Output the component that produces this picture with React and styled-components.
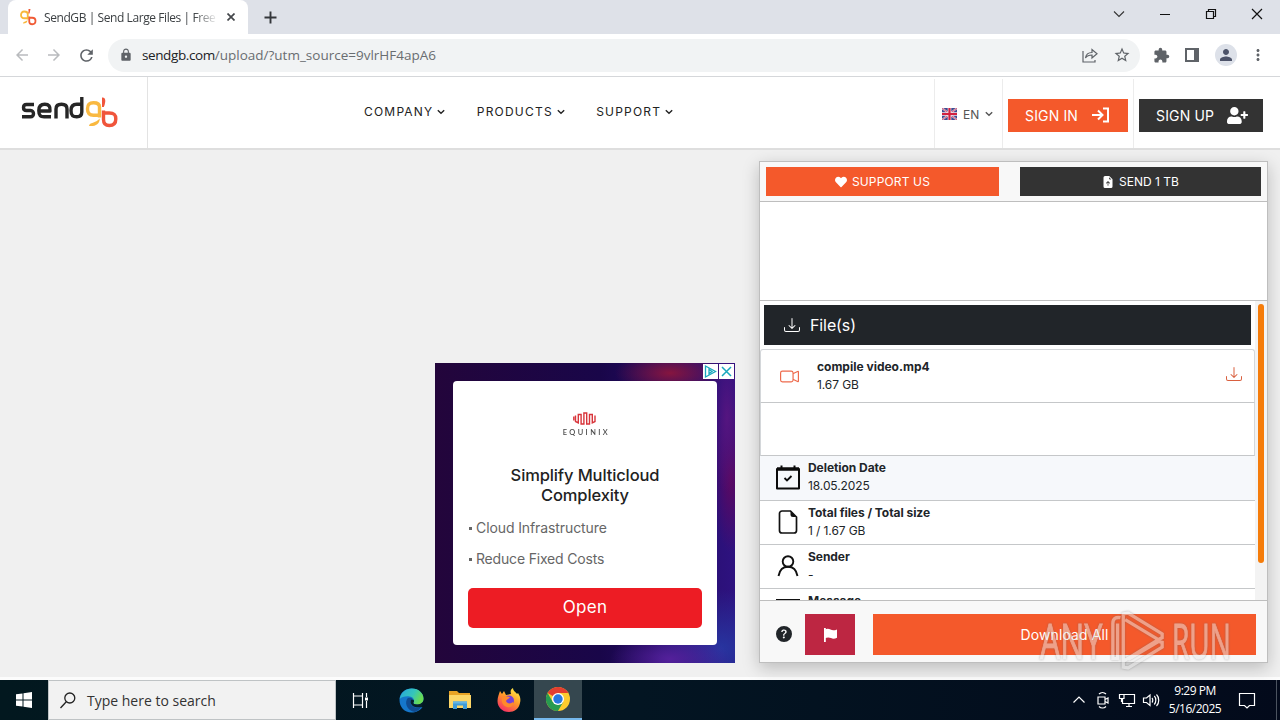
import React from 'react'
import styled, { createGlobalStyle, css } from 'styled-components'
import {
  BsCameraVideo,
  BsDownload,
  BsFileEarmarkArrowUpFill,
  BsQuestionCircleFill,
} from 'react-icons/bs'
import { FaHeart, FaUserPlus } from 'react-icons/fa'
import {
  MdArrowBack,
  MdArrowForward,
  MdExtension,
  MdLock,
  MdMoreVert,
  MdPerson,
  MdRefresh,
  MdStarBorder,
} from 'react-icons/md'

const orange = '#f4592b'
const dark = '#333333'
const line = '#bebebe'

const GlobalStyle = createGlobalStyle`
  * {
    box-sizing: border-box;
  }

  body {
    margin: 0;
    overflow: hidden;
    font-family: Inter, 'Liberation Sans', sans-serif;
    color: #212529;
  }

  svg {
    display: block;
    flex-shrink: 0;
  }

  p,
  h2 {
    margin: 0;
  }
`

const Screen = styled.div`
  display: flex;
  flex-direction: column;
  width: 1280px;
  height: 720px;
  background: #fff;
`

/* ---------- browser ---------- */

const TabStrip = styled.div`
  display: flex;
  height: 34px;
  background: #dee1e8;
`

const Tab = styled.div`
  display: flex;
  align-items: center;
  width: 240px;
  margin-left: 8px;
  padding: 0 10px 0 12px;
  border-radius: 8px 8px 0 0;
  background: #fff;
`

const TabTitle = styled.div`
  width: 172px;
  margin: 1px 11px 0 7px;
  overflow: hidden;
  white-space: nowrap;
  font: 12px/16px 'Open Sans', sans-serif;
  letter-spacing: -0.42px;
  color: #3c4043;
  mask-image: linear-gradient(90deg, #000 150px, transparent 174px);
`

const NewTab = styled.div`
  display: flex;
  align-items: center;
  margin-left: 16px;
`

const WindowButtons = styled.div`
  display: flex;
  align-items: center;
  gap: 34px;
  margin-left: auto;
  padding: 0 17px 6px 0;
`

const Toolbar = styled.div`
  display: flex;
  align-items: center;
  height: 43px;
  padding: 0 13px;
  border-bottom: 1px solid #d5d7da;
  color: #5f6368;
`

const NavButtons = styled.div`
  display: flex;
  gap: 14px;
  color: #5f6368;

  > :not(:last-child) {
    color: #b9bbbe;
  }
`

const AddressBar = styled.div`
  display: flex;
  align-items: center;
  width: 1032px;
  height: 33px;
  margin-left: 12px;
  padding: 0 9px 0 11px;
  border-radius: 17px;
  background: #f1f3f4;

  > :last-child {
    margin-left: 15px;
  }
`

const Url = styled.div`
  flex: 1;
  margin-left: 9px;
  font: 13.5px/20px 'Open Sans', sans-serif;
  color: #696d71;

  span {
    letter-spacing: -0.4px;
    color: #202124;
  }
`

const ToolbarIcons = styled.div`
  display: flex;
  align-items: center;
  margin-left: 13px;
  gap: 12.5px;
`

const Avatar = styled.div`
  display: grid;
  place-items: center;
  width: 22px;
  height: 22px;
  border-radius: 50%;
  background: #dde1e9;
  color: #4c5369;
`

/* ---------- site header ---------- */

const SiteHeader = styled.header`
  display: flex;
  height: 73px;
  border-bottom: 2px solid #dedede;
  background: #fff;
`

const LogoCell = styled.div`
  width: 148px;
  padding: 16px 0 0 20px;
  border-right: 1px solid #e3e3e3;
`

const Menu = styled.nav`
  display: flex;
  align-items: center;
  gap: 31.4px;
  margin-left: 216px;
  padding-bottom: 2px;
`

const MenuItem = styled.div`
  display: flex;
  align-items: center;
  gap: 4px;
  font-size: 12px;
  line-height: 20px;
  letter-spacing: 1.2px;
  color: #222;
`

const HeaderCell = styled.div`
  display: flex;
  align-items: center;
  width: ${({ $width }) => $width}px;
  margin-top: 2px;
  padding-left: ${({ $pad }) => $pad || 5}px;
  border-left: 1px solid #ececec;

  &:nth-child(3) {
    margin-left: auto;
  }
`

const Language = styled.div`
  display: flex;
  align-items: center;
  gap: 6px;
  padding-top: 1px;
  font-size: 12px;
  color: #555;
`

const HeaderButton = styled.div`
  display: flex;
  align-items: center;
  justify-content: space-between;
  width: ${({ $width }) => $width}px;
  height: 33px;
  margin-top: 3px;
  padding: 0 ${({ $right }) => $right}px 0 17px;
  background: ${({ $primary }) => ($primary ? orange : dark)};
  font-size: 14px;
  letter-spacing: 0.15px;
  color: #fff;
  white-space: nowrap;

  span {
    padding-top: 1px;
  }
`

/* ---------- content ---------- */

const Main = styled.main`
  display: flex;
  align-items: flex-end;
  justify-content: flex-end;
  gap: 24px;
  height: 530px;
  padding: 0 12px 14px 0;
  border-bottom: 3px solid #fcfcfc;
  background: #f0f0f0;
`

const Ad = styled.section`
  position: relative;
  width: 300px;
  height: 300px;
  padding: 18px;
  background: radial-gradient(ellipse 55px 22px at 235px 10px, #86153f, transparent),
    radial-gradient(ellipse 16px 75px at 292px 55px, #551580, transparent),
    radial-gradient(ellipse 18px 75px at 296px 115px, #5c0860, transparent),
    radial-gradient(ellipse 60px 28px at 235px 296px, #54209b, transparent),
    radial-gradient(ellipse 70px 60px at 286px 286px, #2735a0, transparent),
    linear-gradient(90deg, #23053b, #190649 55%, #2e1280);
`

const AdBadges = styled.div`
  position: absolute;
  top: 1px;
  right: 1px;
  display: flex;
  gap: 1px;

  svg {
    background: #fff;
  }
`

const AdCard = styled.div`
  display: flex;
  flex-direction: column;
  width: 264px;
  height: 264px;
  padding: 31px 15px 17px;
  border-radius: 4px;
  background: #fff;
`

const Equinix = styled.div`
  display: flex;
  flex-direction: column;
  align-items: center;
  gap: 3px;
  font: 600 7px/8px Lato, sans-serif;
  letter-spacing: 2.3px;
  color: #4a4a4a;

  span {
    display: block;
    margin-right: -2px;
    transform: scaleX(1.06);
  }
`

const AdTitle = styled.h2`
  margin-top: 29px;
  font: 500 16.5px/20px Inter, sans-serif;
  letter-spacing: -0.12px;
  text-align: center;
  color: #222;
`

const AdPoint = styled.p`
  margin-top: ${({ $first }) => ($first ? 13 : 11)}px;
  font: 14px/20px Inter, sans-serif;
  letter-spacing: ${({ $first }) => ($first ? -0.1 : -0.18)}px;
  color: #666;

  &::before {
    content: '';
    display: inline-block;
    width: 3px;
    height: 3px;
    margin: 0 4px 3px 1px;
    background: #666;
  }
`

const AdButton = styled.div`
  margin-top: auto;
  border-radius: 5px;
  background: #ed1c24;
  font: 17px/39px Inter, sans-serif;
  height: 40px;
  letter-spacing: 0.3px;
  text-align: center;
  color: #fff;
`

const Panel = styled.section`
  display: flex;
  flex-direction: column;
  width: 509px;
  height: 502px;
  border: 1px solid ${line};
  background: #f8f8f8;
  box-shadow: 0 5px 16px rgba(0, 0, 0, 0.22);
`

const PanelTop = styled.div`
  display: flex;
  justify-content: space-between;
  height: 40px;
  padding: 5px 6px;
  border-bottom: 1px solid ${line};
`

const PanelButton = styled.div`
  display: flex;
  align-items: center;
  justify-content: center;
  gap: 5px;
  width: ${({ $width }) => $width}px;
  background: ${({ $primary }) => ($primary ? orange : dark)};
  font-size: 12px;
  letter-spacing: ${({ $primary }) => ($primary ? 0.15 : 0)}px;
  color: #fff;
`

const Banner = styled.div`
  height: 99px;
  border-bottom: 1px solid ${line};
  background: #fff;
`

const Scroller = styled.div`
  display: flex;
  height: 299px;
  overflow: hidden;
`

const List = styled.div`
  flex: 1;
  background: #fff;
`

const ScrollTrack = styled.div`
  width: 12px;
  padding: 3px 3px 0;
  background: #f3f3f3;
`

const ScrollThumb = styled.div`
  height: 259px;
  border-radius: 3px;
  background: #f57c0a;
`

const FilesHeading = styled.div`
  display: flex;
  align-items: center;
  gap: 10px;
  height: 40px;
  margin: 4px;
  padding-left: 20px;
  background: #212529;
  font-size: 16px;
  letter-spacing: -0.1px;
  color: #fff;
`

const rowBorder = css`
  border: 1px solid #d4d7da;
  border-bottom-color: #c5c7c9;
`

const FileRow = styled.div`
  display: flex;
  align-items: center;
  height: 54px;
  padding: 0 12px 0 19px;
  ${rowBorder}
  border-radius: 3px 3px 0 0;
  color: #ee6a4c;

  > :last-child {
    margin-bottom: 4px;
    color: #d9603f;
  }
`

const EmptyRow = styled.div`
  height: 53px;
  ${rowBorder}
  border-top: 0;
`

const Lines = styled.div`
  flex: 1;
  font-size: 12px;
  line-height: 18px;
  letter-spacing: -0.1px;
  color: #212529;

  strong {
    display: block;
    font-weight: 700;
    letter-spacing: -0.05px;
  }
`

const FileLines = styled(Lines)`
  margin: 0 0 1px 18px;

  strong {
    letter-spacing: 0;
  }
`

const InfoRow = styled.div`
  display: flex;
  align-items: flex-start;
  gap: 8px;
  height: ${({ $height }) => $height || 44}px;
  padding: 3px 0 0 16px;
  border-bottom: 1px solid #c5c7c9;
  background: ${({ $tinted }) => ($tinted ? '#f6f8fb' : '#fff')};
  color: #111;

  > svg {
    margin-top: 6px;
  }
`

const PanelFooter = styled.footer`
  display: flex;
  align-items: center;
  height: 62px;
  padding: 6px 11px 0 16px;
  border-top: 1px solid ${line};

  > svg {
    margin-bottom: 2px;
  }
`

const FlagButton = styled.div`
  display: grid;
  place-items: center;
  width: 50px;
  height: 41px;
  margin-left: 13px;
  background: #bd2642;
  color: #fff;
`

const DownloadAll = styled.div`
  position: relative;
  width: 383px;
  margin-left: 18px;
  background: ${orange};
  font-size: 14px;
  line-height: 42px;
  height: 41px;
  letter-spacing: 0.1px;
  text-align: center;
  color: #fff;
`

const Watermark = styled.div`
  position: absolute;
  top: -5px;
  left: 167px;
  display: flex;
  align-items: center;
  opacity: 0.5;
  filter: drop-shadow(0 0 1px rgba(100, 100, 100, 0.9));

  svg {
    margin: 0 7px 0 9px;
  }
`

const MarkText = styled.span`
  display: block;
  width: 61px;
  font: 400 50px/60px 'Open Sans', sans-serif;
  text-align: left;
  color: #e9e9e9;
  -webkit-text-stroke: 1px #e9e9e9;
  transform: translateY(-1px) scaleX(${({ $scale }) => $scale});
  transform-origin: left;
`

/* ---------- taskbar ---------- */

const Taskbar = styled.footer`
  display: flex;
  height: 40px;
  background: linear-gradient(90deg, #02181f, #031522 50%, #030a1b);
  color: #fff;
`

const TaskButton = styled.div`
  display: grid;
  place-items: center;
  width: 48px;
  margin-right: ${({ $gap }) => $gap || 0}px;

  ${({ $active }) =>
    $active &&
    css`
      border-bottom: 2px solid #76b9ed;
      background: #35474f;
    `}
`

const Search = styled.div`
  display: flex;
  align-items: center;
  gap: 11px;
  width: 288px;
  padding-left: 11px;
  border: 1px solid #bfc3c5;
  background: #f2f2f2;
  font: 14px/20px 'Open Sans', sans-serif;
  color: #333;

  span {
    padding-top: 1px;
  }
`

const Tray = styled.div`
  display: flex;
  align-items: center;
  gap: 6px;
  margin-left: auto;
`

const Clock = styled.div`
  width: 60px;
  margin-left: -1px;
  font: 12px/18px 'Open Sans', sans-serif;
  letter-spacing: -0.5px;
  text-align: center;
  white-space: nowrap;
`

const TrayEnd = styled.div`
  display: flex;
  align-items: center;
  width: 46px;
  height: 40px;
  margin-right: 3px;
  padding-left: 7px;
  border-right: 1px solid #4b535f;
`

const GbMark = ({ width, height }) => (
  <svg width={width} height={height} viewBox='0 0 34 36' fill='none' strokeWidth='3.6'>
    <path d='M15.500 8V23M15.500 12c0-4-3-5-7-5s-6.500 2-6.500 7 3 6.500 7 6.500h6.500' stroke='#f8b83c' />
    <path d='M15 24c0 5-3 7-9 7 0-4 5-3 9-7Z' fill='#f8b83c' />
    <path d='M18.500 17v10c0 4 2 5.500 6 5.500s6.500-2 6.500-7-3-6-6.500-6h-6' stroke='#f05a35' />
    <path d='M17 2h4l-2 9h-2Z' fill='#f05a35' />
  </svg>
)

const SendGbLogo = () => (
  <svg width='100' height='38' viewBox='0 0 100 38' fill='none'>
    <g stroke='#262626' strokeWidth='3.400' strokeLinejoin='round'>
      <path d='M14 11.500H6.500c-4 0-4 6 0 6h4c4 0 4 6.300 0 6.300H2' />
      <path d='M31 23.800h-7c-4 0-5.200-2-5.200-6.300s2-6.200 6-6.200 5.700 2 5.200 6.700H19' />
      <path d='M36 25.500V16c0-3.500 2-4.700 5.500-4.700s5.500 1.200 5.500 4.700v9.500' />
      <path d='M61.800 4v15c0 3.500-1.500 4.800-5 4.800-4.500 0-5.800-2-5.800-6.300s2-6.200 5.800-6.200h5' />
    </g>
    <path
      d='M79.500 24.500V14c0-3-2-4.200-6-4.200-4.500 0-6 2-6 6.200 0 4.500 2 6.200 6 6.200h5.500'
      stroke='#f9b942'
      strokeWidth='3.400'
    />
    <path d='M79.800 25.500c-.3 6-4.300 8-10.800 7.500.5-4 6.500-2.500 10.800-7.500Z' fill='#f9b83e' />
    <path
      d='M83.500 17.500v9c0 4 1.500 6 5.800 6s6.500-2 6.500-6.500-2-6-6.500-6h-6'
      stroke='#f0553b'
      strokeWidth='3.400'
    />
    <path d='M82 4.500c4-.5 4 4 1.800 9.500H82Z' fill='#f0553b' />
  </svg>
)

const Caret = () => (
  <svg width='8' height='8' viewBox='0 0 8 8' fill='none' stroke='currentColor' strokeWidth='1.400'>
    <path d='m.8 2.300 3.200 3L7.200 2.300' />
  </svg>
)

const Flag = () => (
  <svg width='15' height='12' viewBox='0 0 15 12'>
    <rect width='15' height='12' rx='1' fill='#3d4b91' />
    <path d='m0 0 15 12M15 0 0 12' stroke='#e3c9d8' strokeWidth='1.800' />
    <path d='m0 0 15 12M15 0 0 12' stroke='#cf3151' strokeWidth='.7' />
    <path d='M7.500 0v12M0 6h15' stroke='#f6e6ec' strokeWidth='3.600' />
    <path d='M7.500 0v12M0 6h15' stroke='#d2203f' strokeWidth='2.200' />
  </svg>
)

const SignInIcon = () => (
  <svg width='18' height='16' viewBox='0 0 18 16' fill='none' stroke='#fff' strokeWidth='2'>
    <path d='M0 8h10.500M6 3.500 10.500 8 6 12.500M11 1.500h5v13h-5' />
  </svg>
)

const CalendarIcon = () => (
  <svg width='24' height='25' viewBox='0 0 24 25' fill='none' stroke='#0b0b0b'>
    <path d='M1 4h22v19.500H1Z' strokeWidth='2' strokeLinejoin='round' />
    <path d='M1 4h22' strokeWidth='3.500' />
    <path d='M5.500.5v3M18.500.5v3' strokeWidth='2' />
    <path d='m8.500 13 2.500 2.500 4.500-4.500' strokeWidth='1.800' />
  </svg>
)

const PageIcon = () => (
  <svg width='24' height='24' viewBox='0 0 24 24' fill='none' stroke='#111' strokeWidth='1.700'>
    <path d='M14.500 1H6a2.500 2.500 0 0 0-2.500 2.500v17A2.500 2.500 0 0 0 6 23h12a2.500 2.500 0 0 0 2.500-2.500V7Z' />
    <path d='M14.500 1v3.500A2.500 2.500 0 0 0 17 7h3.500Z' fill='#111' stroke='none' />
  </svg>
)

const PersonIcon = () => (
  <svg width='24' height='24' viewBox='0 0 24 24' fill='none' stroke='#111' strokeWidth='1.900'>
    <circle cx='12' cy='7.500' r='5.300' />
    <path d='M2.500 22c1-5.500 4.500-9.200 9.500-9.200s8.500 3.700 9.500 9.200' />
  </svg>
)

const PennantIcon = () => (
  <svg width='13' height='16' viewBox='0 0 13 16' fill='#fff'>
    <path d='M0 1h1.800v14H0Z' />
    <path d='M1 2.500c2-1 4-.8 5.500.1 2 1 4 .8 6.500-.2v8.300c-2 1-4 1.300-6 .4-2-.9-4-.8-6 .2Z' />
  </svg>
)

const EquinixMark = () => (
  <svg width='24' height='13' viewBox='0 0 24 13' fill='none' stroke='#d8353b' strokeWidth='1.400'>
    <path d='M2.500 3.500v6l2.800 1.300V2.500h2.800v9.500h2.800V1h2.800v11h2.800V2.500h2.800v8.300L22 9.500v-6M.8 4.500v4' />
  </svg>
)

const EdgeIcon = () => (
  <svg width='25' height='25' viewBox='0 0 25 25'>
    <defs>
      <linearGradient id='edgeTop' x1='0' x2='1' y1='0' y2='.4'>
        <stop stopColor='#26a6dd' />
        <stop offset='.6' stopColor='#35c5bb' />
        <stop offset='1' stopColor='#69dc52' />
      </linearGradient>
    </defs>
    <path
      d='M.5 12C.5 5 6 .5 12.500.5c7 0 12 4.500 12 10 0 4-3 6-6 6-1.500 1 2 3.500 5 2.500C21.500 22.500 17 24.500 12.500 24.500 5.500 24.500.5 19 .5 12Z'
      fill='#1577cb'
    />
    <path d='M.7 11C2 4 7 .5 12.800.5 20 .5 24.500 5.500 24.500 10.500c0 4-3 6-6 6s-4.500-1-4-2c1.500-2 0-5.500-4-6C6.500 8 2.500 9 .7 11Z' fill='url(#edgeTop)' />
    <path d='M8 11c-3 6 2 12.500 8 13 3-1 5-3 6.500-5.500-5 2.500-10.500.5-11-4 0-2 1-3 2-3.500-1.500-2-4.500-1.500-5.500 0Z' fill='#104c91' />
    <path d='M12.500 11.500c2.500-.3 3.200 1.500 2 3-.5 1 1 2 4 2 2.500 0 4-1 5-2.500.6 2.500-.3 4-1.500 4.800-4 1.500-9.500 0-10.500-4.300 0-1.300.3-2.300 1-3Z' fill='#06202c' />
  </svg>
)

const FolderIcon = () => (
  <svg width='22' height='20' viewBox='0 0 22 20'>
    <path d='M0 1h8l2 2h11v7H0Z' fill='#e8a325' />
    <path d='M0 5h22v13H0Z' fill='#fcd667' />
    <path d='M4 19v-7.500h14V19h-4v-3.500H8V19Z' fill='#3f9bd8' />
    <path d='M4 11.500h14v2H4Z' fill='#65b5e4' />
  </svg>
)

const FirefoxIcon = () => (
  <svg width='24' height='24' viewBox='0 0 24 24'>
    <defs>
      <linearGradient id='fox' x1='.8' x2='.2' y1='0' y2='1'>
        <stop stopColor='#fff04a' />
        <stop offset='.45' stopColor='#ff9a28' />
        <stop offset='1' stopColor='#f5266a' />
      </linearGradient>
    </defs>
    <path d='M3 3 5 6l2-3 2 4 5-1c-1-3 0-5 2-6 0 3 3 4 4 6l1-1c2 3 3 6 2 10-1 6-6 9-11 9C5 24 .5 19 .5 13 .5 9 2 6 3 3Z' fill='url(#fox)' />
    <circle cx='12' cy='12.500' r='5' fill='#7542d8' />
    <path d='M5 9c3-2 5 0 8 0-1 2-3 2-4 4 1 3 5 3 7 1 1 4-3 6-6 5-4-1-6-5-5-10Z' fill='#ff8a2b' />
  </svg>
)

const ChromeIcon = () => (
  <svg width='24' height='24' viewBox='0 0 24 24'>
    <circle cx='12' cy='12' r='12' fill='#fccb2f' />
    <path d='M12 12 1.600 6A12 12 0 0 1 22.400 6H12Z' fill='#e33e30' />
    <path d='M1.600 6A12 12 0 0 0 12 24l5.200-9H6.800Z' fill='#279b50' />
    <circle cx='12' cy='12' r='6' fill='#fff' />
    <circle cx='12' cy='12' r='4.700' fill='#2878df' />
  </svg>
)

const TrayIcon = ({ children }) => (
  <svg width='18' height='18' viewBox='0 0 18 18' fill='none' stroke='#fff' strokeWidth='1.200'>
    {children}
  </svg>
)

const Browser = () => (
  <>
    <TabStrip>
      <Tab>
        <GbMark width={17} height={18} />
        <TabTitle>SendGB | Send Large Files | Free t</TabTitle>
        <svg width='8' height='8' viewBox='0 0 8 8' stroke='#44474b' strokeWidth='1.700'>
          <path d='m.5.5 7 7M7.500.5l-7 7' />
        </svg>
      </Tab>
      <NewTab>
        <svg width='13' height='13' viewBox='0 0 13 13' stroke='#34373b' strokeWidth='1.900'>
          <path d='M6.500.5v12M.5 6.500h12' />
        </svg>
      </NewTab>
      <WindowButtons>
        <svg width='12' height='8' viewBox='0 0 12 8' fill='none' stroke='#333' strokeWidth='1.100'>
          <path d='m1 1.500 5 5 5-5' />
        </svg>
        <svg width='12' height='12' viewBox='0 0 12 12' stroke='#111'>
          <path d='M1 6.500h10' />
        </svg>
        <svg width='12' height='12' viewBox='0 0 12 12' fill='none' stroke='#111' strokeWidth='1.200'>
          <path d='M1.500 3.500h7v7h-7ZM3.500 3.500v-2h7v7h-2' />
        </svg>
        <svg width='12' height='12' viewBox='0 0 12 12' stroke='#111' strokeWidth='1.200'>
          <path d='m1 1 10 10M11 1 1 11' />
        </svg>
      </WindowButtons>
    </TabStrip>
    <Toolbar>
      <NavButtons>
        <MdArrowBack size={18} />
        <MdArrowForward size={18} />
        <MdRefresh size={19} />
      </NavButtons>
      <AddressBar>
        <MdLock size={14} />
        <Url>
          <span>sendgb.com</span>/upload/?utm_source=9vlrHF4apA6
        </Url>
        <svg width='16' height='15' viewBox='0 0 16 15' fill='none' stroke='#5f6368' strokeWidth='1.200'>
          <path d='M1 3v11h12v-2M3.500 10c.5-4 3-5.500 6.500-5.500V1.500l5 4.200-5 4.200V7c-3 0-5 .7-6.500 3Z' />
        </svg>
        <MdStarBorder size={18} />
      </AddressBar>
      <ToolbarIcons>
        <MdExtension size={17} />
        <svg width='20' height='14' viewBox='-3 0 20 14' fill='none' stroke='#5f6368' strokeWidth='2'>
          <path d='M1 1h12v12H1Z' />
          <path d='M11 1v12' strokeWidth='4' />
        </svg>
        <Avatar>
          <MdPerson size={18} />
        </Avatar>
        <MdMoreVert size={18} />
      </ToolbarIcons>
    </Toolbar>
  </>
)

const Header = () => (
  <SiteHeader>
    <LogoCell>
      <SendGbLogo />
    </LogoCell>
    <Menu>
      {['COMPANY', 'PRODUCTS', 'SUPPORT'].map((item) => (
        <MenuItem key={item}>
          {item}
          <Caret />
        </MenuItem>
      ))}
    </Menu>
    <HeaderCell $width={68} $pad={7}>
      <Language>
        <Flag />
        EN
        <Caret />
      </Language>
    </HeaderCell>
    <HeaderCell $width={131}>
      <HeaderButton $primary $width={120} $right={18}>
        <span>SIGN IN</span>
        <SignInIcon />
      </HeaderButton>
    </HeaderCell>
    <HeaderCell $width={147}>
      <HeaderButton $width={124} $right={15}>
        <span>SIGN UP</span>
        <FaUserPlus size={21} />
      </HeaderButton>
    </HeaderCell>
  </SiteHeader>
)

const AdBox = () => (
  <Ad>
    <AdBadges>
      <svg width='15' height='15' viewBox='0 0 15 15' fill='none' stroke='#19a7bd' strokeWidth='1.300'>
        <path d='M2.500 2v11l10-5.500ZM6 5.500v4l3-2Z' />
      </svg>
      <svg width='15' height='15' viewBox='0 0 15 15' stroke='#19a7bd' strokeWidth='1.500'>
        <path d='m3 3 9 9M12 3l-9 9' />
      </svg>
    </AdBadges>
    <AdCard>
      <Equinix>
        <EquinixMark />
        <span>EQUINIX</span>
      </Equinix>
      <AdTitle>
        Simplify Multicloud
        <br />
        Complexity
      </AdTitle>
      <AdPoint $first>Cloud Infrastructure</AdPoint>
      <AdPoint>Reduce Fixed Costs</AdPoint>
      <AdButton>Open</AdButton>
    </AdCard>
  </Ad>
)

const DownloadPanel = () => (
  <Panel>
    <PanelTop>
      <PanelButton $primary $width={233}>
        <FaHeart size={12} />
        SUPPORT US
      </PanelButton>
      <PanelButton $width={241}>
        <BsFileEarmarkArrowUpFill size={12} />
        SEND 1 TB
      </PanelButton>
    </PanelTop>
    <Banner />
    <Scroller>
      <List>
        <FilesHeading>
          <BsDownload size={16} />
          File(s)
        </FilesHeading>
        <FileRow>
          <BsCameraVideo size={19} />
          <FileLines>
            <strong>compile video.mp4</strong>
            1.67 GB
          </FileLines>
          <BsDownload size={16} />
        </FileRow>
        <EmptyRow />
        <InfoRow $tinted $height={45}>
          <CalendarIcon />
          <Lines>
            <strong>Deletion Date</strong>
            18.05.2025
          </Lines>
        </InfoRow>
        <InfoRow>
          <PageIcon />
          <Lines>
            <strong>Total files / Total size</strong>1 / 1.67 GB
          </Lines>
        </InfoRow>
        <InfoRow>
          <PersonIcon />
          <Lines>
            <strong>Sender</strong>-
          </Lines>
        </InfoRow>
        <InfoRow>
          <svg width='24' height='24' viewBox='0 0 24 24' fill='none' stroke='#111' strokeWidth='2'>
            <path d='M1 2h22v18H1Z' />
          </svg>
          <Lines>
            <strong>Message</strong>
          </Lines>
        </InfoRow>
      </List>
      <ScrollTrack>
        <ScrollThumb />
      </ScrollTrack>
    </Scroller>
    <PanelFooter>
      <BsQuestionCircleFill size={16} />
      <FlagButton>
        <PennantIcon />
      </FlagButton>
      <DownloadAll>
        Download All
        <Watermark>
          <MarkText $scale={0.64}>ANY</MarkText>
          <svg width='55' height='63' viewBox='0 0 58 64' fill='none' stroke='#e9e9e9' strokeWidth='3.500'>
            <path d='M11 8c-5-1-8 1-8 6v37h5V14M14 54V4l5-1 36 22v4l-4 2-35-21M14 54l37-23M14 54v6l5 1 36-22v-5l-4-1-32 19' />
          </svg>
          <MarkText $scale={0.56}>RUN</MarkText>
        </Watermark>
      </DownloadAll>
    </PanelFooter>
  </Panel>
)

const WindowsTaskbar = () => (
  <Taskbar>
    <TaskButton>
      <svg width='16' height='16' viewBox='0 0 16 16' fill='#fff'>
        <path d='M0 2.300 6.500 1.400v6.100H0ZM7.500 1.200 16 0v7.500H7.500ZM0 8.500h6.500v6.100L0 13.700ZM7.500 8.500H16V16l-8.500-1.200Z' />
      </svg>
    </TaskButton>
    <Search>
      <svg width='16' height='17' viewBox='0 0 16 17' fill='none' stroke='#222' strokeWidth='1.300'>
        <circle cx='9.800' cy='6' r='5' />
        <path d='M6.300 9.700.5 16' />
      </svg>
      <span>Type here to search</span>
    </Search>
    <TaskButton $gap={3}>
      <svg width='17' height='17' viewBox='0 0 17 17' fill='none' stroke='#fff' strokeWidth='1.200'>
        <path d='M1.500 1v3h9V1M1.500 4v9M10.500 4v9M1.500 16v-3h9v3M14.500 1v4M14.500 9v7' />
        <path d='M13 5.500h3v3h-3Z' fill='#fff' stroke='none' />
      </svg>
    </TaskButton>
    <TaskButton $gap={1}>
      <EdgeIcon />
    </TaskButton>
    <TaskButton $gap={1}>
      <FolderIcon />
    </TaskButton>
    <TaskButton $gap={1}>
      <FirefoxIcon />
    </TaskButton>
    <TaskButton $active>
      <ChromeIcon />
    </TaskButton>
    <Tray>
      <TrayIcon>
        <path d='m3.500 11.500 5.500-5.500 5.500 5.500' />
      </TrayIcon>
      <TrayIcon>
        <path d='M4 6h7v7H4ZM11 8.500l3-1.500v5l-3-1.500M5 3c2-2 5-2 7 0M5 15.500c2 2 5 2 7 0' />
      </TrayIcon>
      <TrayIcon>
        <path d='M6 3.500h10.500v9H4.500V8M8 15.500h6M11 12.500v3M1.500 3.500H6v4H1.500ZM3.500 7.500V11' />
      </TrayIcon>
      <TrayIcon>
        <path d='M1.500 7h3l3.500-3v10.500l-3.500-3h-3ZM10 7c1 1 1 3.500 0 4.500M12.300 5c2 2 2 6.500 0 8.500M14.500 3.500c3 3 3 8.500 0 11.500' />
      </TrayIcon>
      <Clock>
        9:29 PM
        <br />
        5/16/2025
      </Clock>
      <TrayEnd>
        <TrayIcon>
          <path d='M1.500 2.500h15v12h-5L9 17l-2.500-2.500h-5Z' />
        </TrayIcon>
      </TrayEnd>
    </Tray>
  </Taskbar>
)

const App = () => (
  <>
    <GlobalStyle />
    <Screen>
      <Browser />
      <Header />
      <Main>
        <AdBox />
        <DownloadPanel />
      </Main>
      <WindowsTaskbar />
    </Screen>
  </>
)

export default App
